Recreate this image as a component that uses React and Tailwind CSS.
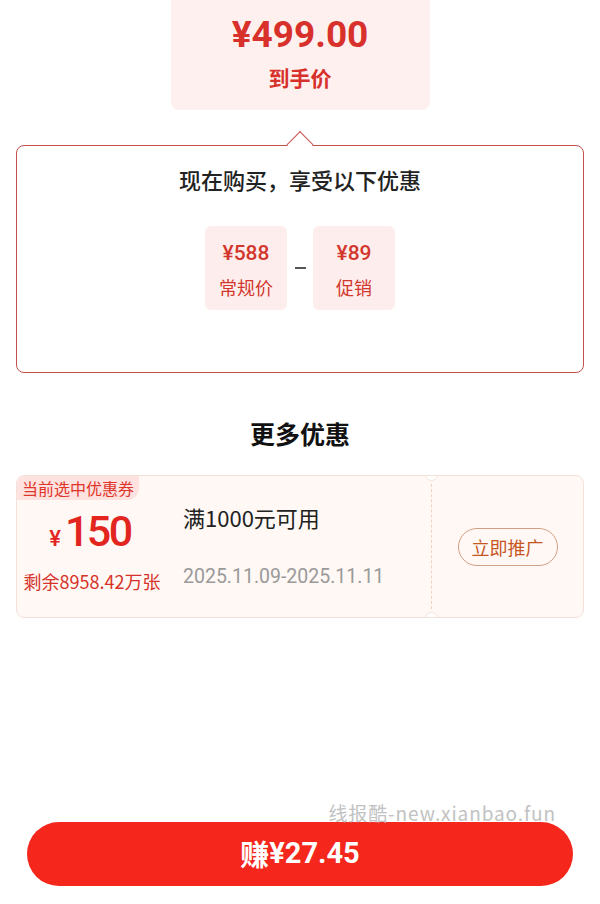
/**
 * 优惠详情页：到手价 + 优惠构成 + 优惠券 + 底部赚钱按钮
 */
const cjk = { fontFamily: '"Noto Sans CJK SC", "Noto Sans", sans-serif' }
const num = { fontFamily: 'Roboto, "Noto Sans CJK SC", sans-serif' }

function PriceChip({ price, label }) {
  return (
    <div className="w-[82px] h-[84px] rounded-md bg-[#fdeeed] flex flex-col items-center justify-center pt-[3px]">
      <span className="text-[21px] leading-[28px] font-medium text-[#d3362c]" style={num}>{price}</span>
      <span className="text-[18px] leading-[26px] text-[#d3362c] mt-[7px]">{label}</span>
    </div>
  )
}

export default function App() {
  return (
    <div className="relative w-[600px] h-[904px] bg-white flex flex-col" style={cjk}>

      {/* 到手价 */}
      <div className="mx-auto w-[259px] h-[110px] rounded-b-lg bg-[#fdf0ef] flex flex-col items-center pt-[13px]">
        <span className="text-[37px] leading-[44px] font-bold text-[#d8302a]" style={num}>¥499.00</span>
        <span className="text-[21px] leading-[28px] font-bold text-[#d8302a] mt-[6px]">到手价</span>
      </div>

      {/* 优惠构成气泡 */}
      <div className="relative mx-[16px] mt-[35px] h-[228px] rounded-lg border-[1.5px] border-[#c4514b] bg-white flex flex-col items-center pt-[18px]">
        <div className="absolute left-1/2 -translate-x-1/2 top-[-11px] w-[19px] h-[19px] rotate-45 bg-white border-t-[1.5px] border-l-[1.5px] border-[#c4514b]"></div>
        <h2 className="relative text-[22px] leading-[30px] font-medium text-[#222]">现在购买，享受以下优惠</h2>
        <div className="flex items-center mt-[32px]">
          <PriceChip price="¥588" label="常规价" />
          <span className="w-[26px] flex justify-center">
            <span className="block w-[11px] h-[2px] bg-[#555]"></span>
          </span>
          <PriceChip price="¥89" label="促销" />
        </div>
      </div>

      {/* 更多优惠 */}
      <h2 className="mt-[44px] text-center text-[25px] leading-[32px] font-bold text-[#111]">更多优惠</h2>

      {/* 优惠券 */}
      <div className="relative mx-[16px] mt-[26px] h-[143px] rounded-lg border border-[#f3e2da] bg-[#fff8f4] flex overflow-hidden">
        <span className="absolute top-0 left-0 h-[24px] px-[5px] rounded-tl-lg rounded-br-xl bg-[#fde2df] text-[16px] leading-[24px] text-[#e0352b]">当前选中优惠券</span>

        <div className="w-[150px] flex flex-col items-center pt-[32px]">
          <div className="flex items-baseline text-[#e3251f] pr-[4px]" style={num}>
            <span className="text-[22px] font-medium mr-[4px]">¥</span>
            <span className="text-[43px] leading-[46px] font-medium tracking-[-2.5px]">150</span>
          </div>
          <span className="mt-[14px] text-[18px] leading-[24px] text-[#d6322a]">剩余8958.42万张</span>
        </div>

        <div className="w-[264px] flex flex-col pl-[16px] pt-[26px]">
          <span className="text-[22px] leading-[30px] text-[#222]">满1000元可用</span>
          <span className="mt-[32px] text-[19.5px] leading-[26px] text-[#9a9a9a]" style={num}>2025.11.09-2025.11.11</span>
        </div>

        {/* 撕口 + 虚线 */}
        <div className="relative w-0 border-l border-dashed border-[#ecd3c6] my-[8px]">
          <span className="absolute left-[-7px] top-[-16px] w-[13px] h-[13px] rounded-full bg-white border border-[#f3e2da]"></span>
          <span className="absolute left-[-7px] bottom-[-16px] w-[13px] h-[13px] rounded-full bg-white border border-[#f3e2da]"></span>
        </div>

        <div className="flex-1 flex items-center justify-center">
          <button className="h-[38px] px-[13px] rounded-full border border-[#d2a084] text-[18px] leading-[24px] text-[#c6561f]">立即推广</button>
        </div>
      </div>

      <div className="flex-1"></div>

      {/* 水印 */}
      <span className="absolute right-[44px] top-[801px] text-[19px] leading-[24px] tracking-[0.9px] text-[#c2c2c2]">线报酷-new.xianbao.fun</span>

      {/* 底部按钮 */}
      <button className="mx-[27px] mb-[18px] h-[64px] rounded-full bg-[#f5261c] text-white text-[29px] font-bold flex items-center justify-center">
        <span>赚</span><span style={num}>¥27.45</span>
      </button>
    </div>
  )
}
